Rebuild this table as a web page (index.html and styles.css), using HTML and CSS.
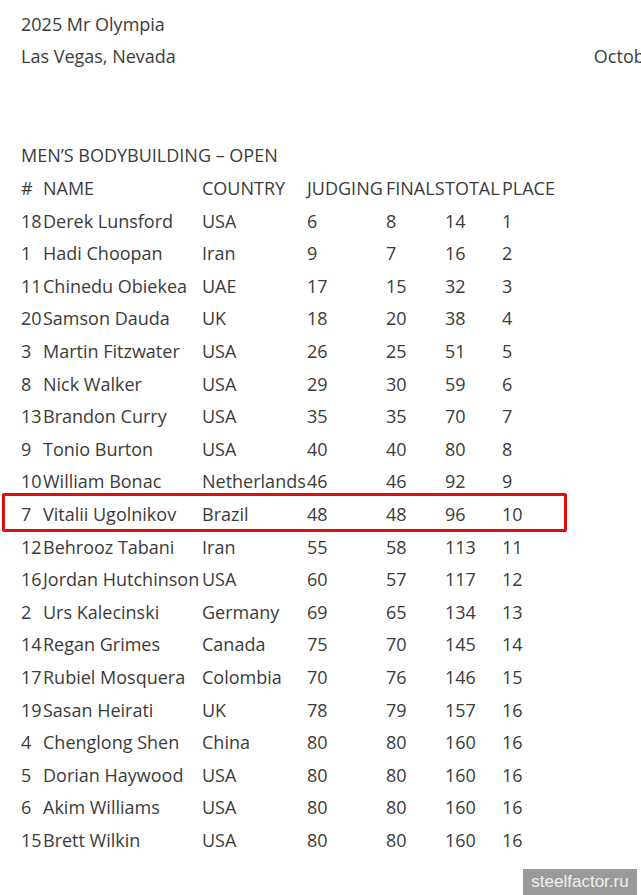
FILE: index.html
```html
<!DOCTYPE html>
<html>
<head>
<meta charset="utf-8">
<link rel="stylesheet" href="styles.css">
</head>
<body>
<div class="page">
  <div class="event">
    <div class="line">2025 Mr Olympia</div>
    <div class="line row2"><span>Las Vegas, Nevada</span><span class="date">October 9-12, 2025</span></div>
  </div>
  <div class="section">MEN’S BODYBUILDING – OPEN</div>
  <div class="tablewrap">
    <table class="results">
      <colgroup>
        <col class="c-num"><col class="c-name"><col class="c-country"><col class="c-judging"><col class="c-finals"><col class="c-total"><col class="c-place">
      </colgroup>
      <thead>
        <tr><th>#</th><th>NAME</th><th>COUNTRY</th><th>JUDGING</th><th>FINALS</th><th>TOTAL</th><th>PLACE</th></tr>
      </thead>
      <tbody>
        <tr><td>18</td><td>Derek Lunsford</td><td>USA</td><td>6</td><td>8</td><td>14</td><td>1</td></tr>
        <tr><td>1</td><td>Hadi Choopan</td><td>Iran</td><td>9</td><td>7</td><td>16</td><td>2</td></tr>
        <tr><td>11</td><td>Chinedu Obiekea</td><td>UAE</td><td>17</td><td>15</td><td>32</td><td>3</td></tr>
        <tr><td>20</td><td>Samson Dauda</td><td>UK</td><td>18</td><td>20</td><td>38</td><td>4</td></tr>
        <tr><td>3</td><td>Martin Fitzwater</td><td>USA</td><td>26</td><td>25</td><td>51</td><td>5</td></tr>
        <tr><td>8</td><td>Nick Walker</td><td>USA</td><td>29</td><td>30</td><td>59</td><td>6</td></tr>
        <tr><td>13</td><td>Brandon Curry</td><td>USA</td><td>35</td><td>35</td><td>70</td><td>7</td></tr>
        <tr><td>9</td><td>Tonio Burton</td><td>USA</td><td>40</td><td>40</td><td>80</td><td>8</td></tr>
        <tr><td>10</td><td>William Bonac</td><td>Netherlands</td><td>46</td><td>46</td><td>92</td><td>9</td></tr>
        <tr><td>7</td><td>Vitalii Ugolnikov</td><td>Brazil</td><td>48</td><td>48</td><td>96</td><td>10</td></tr>
        <tr><td>12</td><td>Behrooz Tabani</td><td>Iran</td><td>55</td><td>58</td><td>113</td><td>11</td></tr>
        <tr><td>16</td><td>Jordan Hutchinson</td><td>USA</td><td>60</td><td>57</td><td>117</td><td>12</td></tr>
        <tr><td>2</td><td>Urs Kalecinski</td><td>Germany</td><td>69</td><td>65</td><td>134</td><td>13</td></tr>
        <tr><td>14</td><td>Regan Grimes</td><td>Canada</td><td>75</td><td>70</td><td>145</td><td>14</td></tr>
        <tr><td>17</td><td>Rubiel Mosquera</td><td>Colombia</td><td>70</td><td>76</td><td>146</td><td>15</td></tr>
        <tr><td>19</td><td>Sasan Heirati</td><td>UK</td><td>78</td><td>79</td><td>157</td><td>16</td></tr>
        <tr><td>4</td><td>Chenglong Shen</td><td>China</td><td>80</td><td>80</td><td>160</td><td>16</td></tr>
        <tr><td>5</td><td>Dorian Haywood</td><td>USA</td><td>80</td><td>80</td><td>160</td><td>16</td></tr>
        <tr><td>6</td><td>Akim Williams</td><td>USA</td><td>80</td><td>80</td><td>160</td><td>16</td></tr>
        <tr><td>15</td><td>Brett Wilkin</td><td>USA</td><td>80</td><td>80</td><td>160</td><td>16</td></tr>
      </tbody>
    </table>
    <div class="highlight"></div>
  </div>
</div>
<div class="watermark">steelfactor.ru</div>
</body>
</html>
```
FILE: styles.css
```css
html, body {
  margin: 0;
  padding: 0;
  background: #fff;
  overflow: hidden;
}
body {
  width: 641px;
  height: 895px;
  position: relative;
  font-family: "Open Sans", "Liberation Sans", sans-serif;
  font-size: 18px;
  color: #3b3b3b;
}
.page {
  padding: 8px 0 0 21px;
}
.line {
  line-height: 32px;
}
.row2 {
  display: flex;
  white-space: nowrap;
}
.date {
  margin-left: 418px;
}
.section {
  margin-top: 67px;
  line-height: 32px;
}
.tablewrap {
  position: relative;
  margin-top: 1px;
}
.results {
  border-collapse: collapse;
  border-spacing: 0;
}
.c-num { width: 22px; }
.c-name { width: 159px; }
.c-country { width: 105px; }
.c-judging { width: 79px; }
.c-finals { width: 59px; }
.c-total { width: 57px; }
.results th, .results td {
  padding: 0;
  text-align: left;
  font-weight: normal;
  line-height: 32.6px;
  white-space: nowrap;
  vertical-align: middle;
}
.highlight {
  position: absolute;
  left: -19px;
  top: 321px;
  width: 559px;
  height: 33px;
  border: 3px solid #d81010;
  border-radius: 2px;
}
.watermark {
  position: absolute;
  right: 4px;
  bottom: 0;
  width: 114px;
  height: 26px;
  background: #9a9a9a;
  color: #f0f0f0;
  font-family: "Liberation Sans", Arial, sans-serif;
  font-size: 17px;
  line-height: 26px;
  text-align: center;
}
```
